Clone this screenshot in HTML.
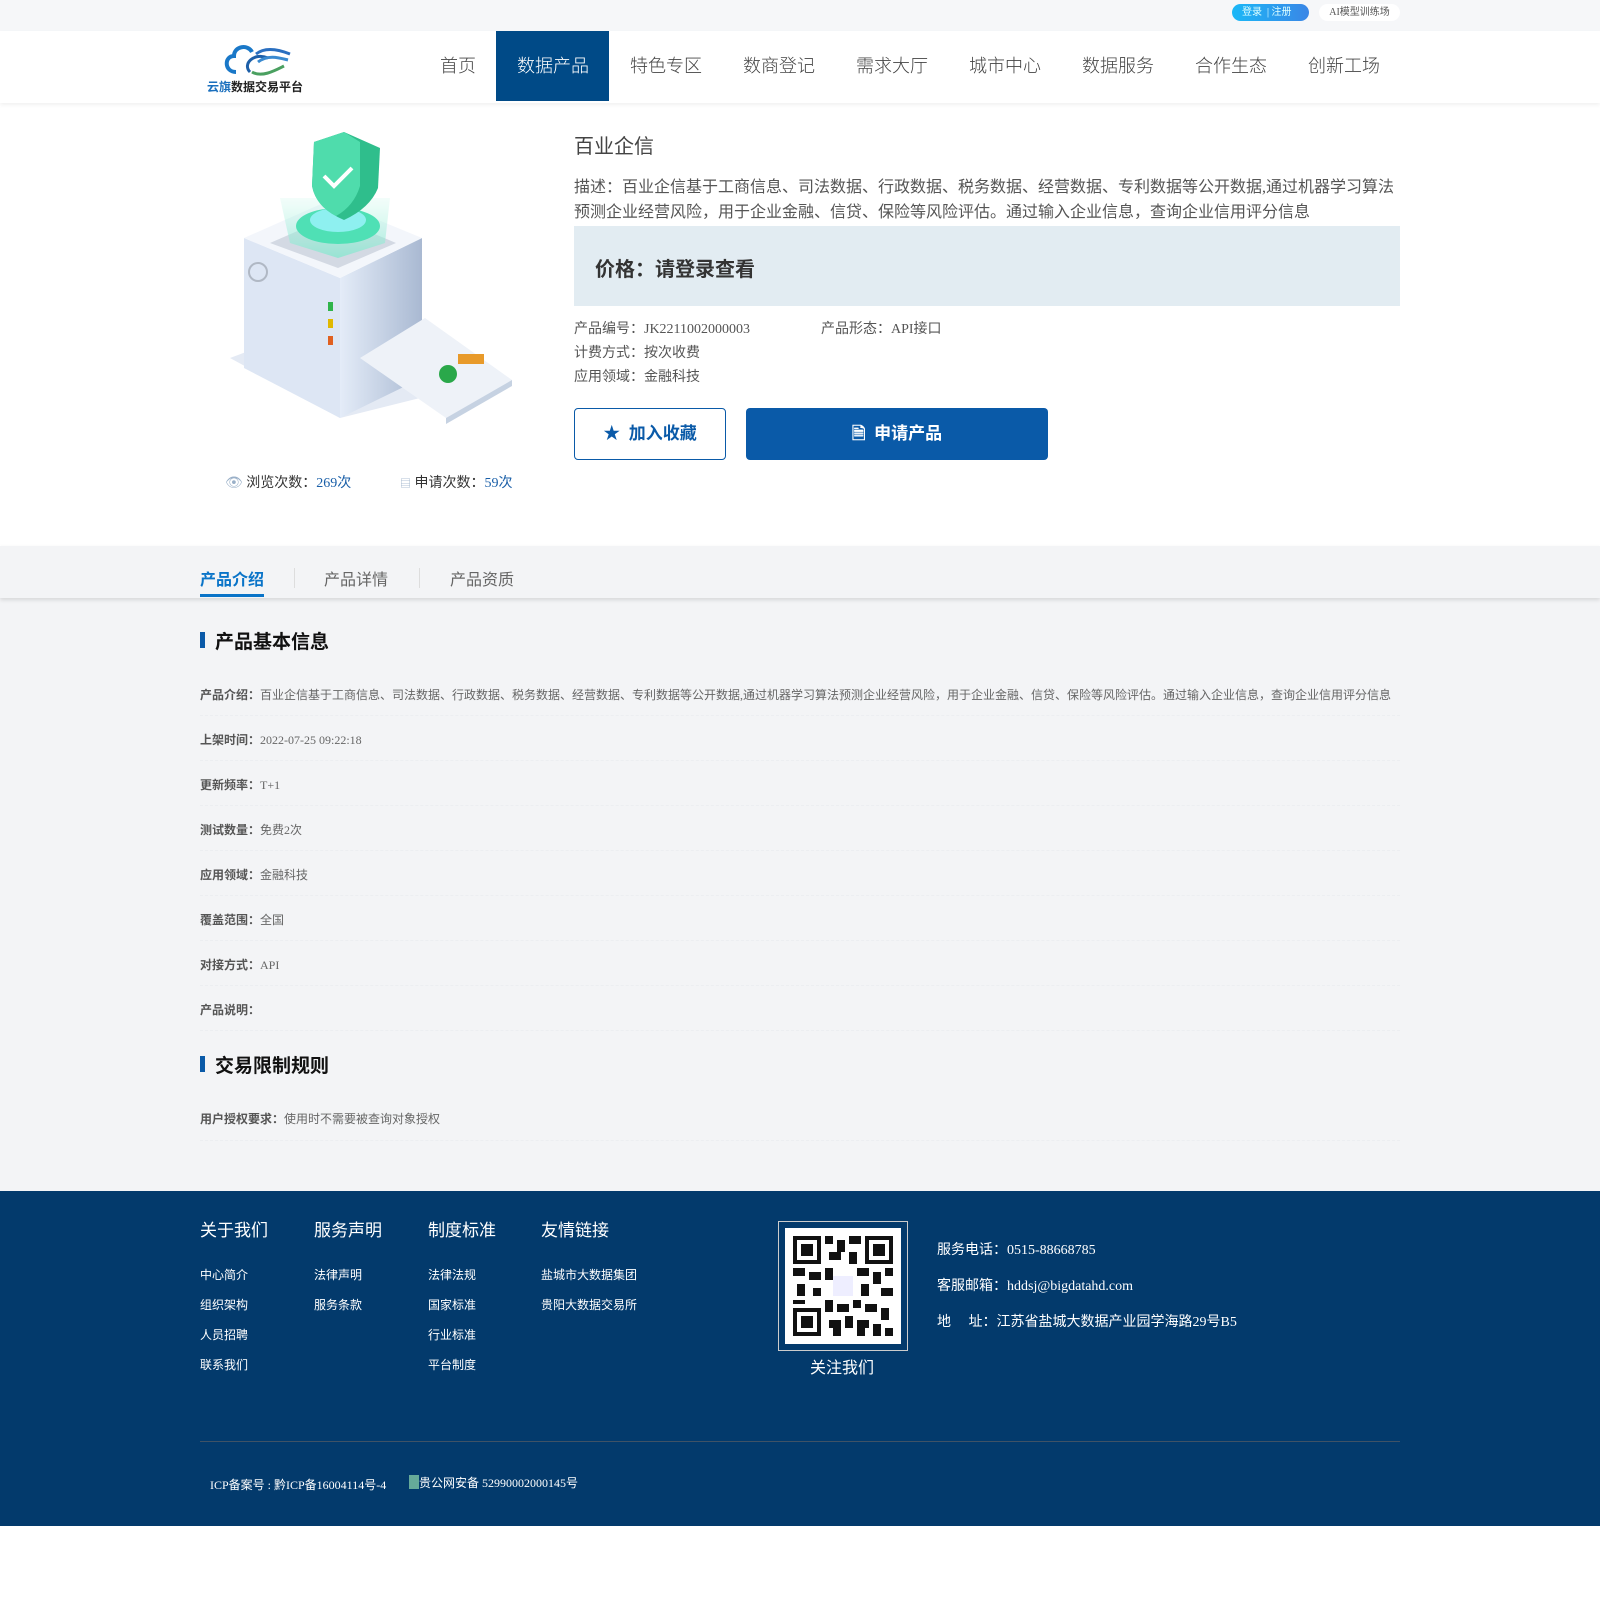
<!DOCTYPE html>
<html><head><meta charset="utf-8">
<style>
*{margin:0;padding:0;box-sizing:border-box}
body{width:1600px;height:1600px;position:relative;background:#fff;font-family:"Liberation Serif","Noto Sans CJK SC",serif;color:#333;overflow:hidden}
.a{position:absolute;white-space:nowrap}
.nav{font-family:"Liberation Sans","Noto Sans CJK SC",sans-serif;font-size:18px;color:#444;top:52px;font-weight:300}
.lbl{font-size:12px;color:#666}
.lbl b{color:#555}
.dl{position:absolute;left:200px;width:1200px;border-top:1px dashed #eceef1}
.fh{font-size:17px;color:#fff;top:1216px;font-family:"Liberation Sans","Noto Sans CJK SC",sans-serif}
.fl{font-size:12px;color:#fff}
</style></head><body>
<div class="a" style="left:0;top:0;width:1600px;height:31px;background:#f6f7f9"></div>
<div class="a" style="left:1232px;top:4px;width:77px;height:17px;border-radius:9px;background:linear-gradient(90deg,#1bb8f7,#3a86e6);color:#dff;font-size:10px;line-height:17px;padding-left:10px">登录 &nbsp;| 注册</div>
<div class="a" style="left:1319px;top:4px;width:81px;height:17px;border-radius:9px;background:#fff;color:#555;font-size:10px;line-height:17px;text-align:center">AI模型训练场</div>
<div class="a" style="left:0;top:31px;width:1600px;height:72px;background:#fff;box-shadow:0 2px 4px rgba(0,0,0,.06)"></div>
<svg class="a" style="left:222px;top:42px" width="72" height="36" viewBox="0 0 72 36"><path d="M14 30 C2 30 2 14 12 14 C12 4 26 2 30 10" fill="none" stroke="#1a78c8" stroke-width="4"/><path d="M28 30 C20 22 32 10 46 16" fill="none" stroke="#1d5fa8" stroke-width="3"/><path d="M34 12 C44 4 58 8 68 12" fill="none" stroke="#2a6fc0" stroke-width="3"/><path d="M36 20 C46 12 58 16 66 18" fill="none" stroke="#3a8ad0" stroke-width="3"/><path d="M30 30 C40 36 54 28 62 24" fill="none" stroke="#4aa060" stroke-width="3"/></svg>
<div class="a" style="left:207px;top:78px;font-size:12px;font-weight:bold;font-family:'Liberation Sans','Noto Sans CJK SC',sans-serif;color:#222"><span style="color:#1a6fbd">云旗</span>数据交易平台</div>
<div class="a" style="left:496px;top:31px;width:113px;height:70px;background:#004a87"></div>
<div class="a nav" style="left:440px">首页</div>
<div class="a nav" style="left:517px;color:#fff">数据产品</div>
<div class="a nav" style="left:630px">特色专区</div>
<div class="a nav" style="left:743px">数商登记</div>
<div class="a nav" style="left:856px">需求大厅</div>
<div class="a nav" style="left:969px">城市中心</div>
<div class="a nav" style="left:1082px">数据服务</div>
<div class="a nav" style="left:1195px">合作生态</div>
<div class="a nav" style="left:1308px">创新工场</div>

<svg class="a" style="left:220px;top:128px" width="306" height="310" viewBox="0 0 306 310">
<defs><linearGradient id="g1" x1="0" x2="1"><stop offset="0" stop-color="#e4ecf8"/><stop offset="1" stop-color="#a9b9d2"/></linearGradient><linearGradient id="gl" x1="0" y1="0" x2="0" y2="1"><stop offset="0" stop-color="#bff5e6" stop-opacity=".2"/><stop offset="1" stop-color="#7de8cc" stop-opacity=".7"/></linearGradient></defs>
<path d="M10 230 L120 290 L200 270 L200 250 L90 200 Z" fill="#e4eaf4"/>
<path d="M24 110 L120 150 L120 290 L24 240 Z" fill="#dde6f4"/>
<path d="M120 150 L202 110 L202 250 L120 290 Z" fill="url(#g1)"/>
<path d="M24 110 L110 72 L202 110 L120 150 Z" fill="#f3f6fb"/>
<path d="M50 115 L112 88 L176 115 L118 140 Z" fill="#d3d9e3"/>
<path d="M60 70 L170 70 L165 115 L118 130 L70 115 Z" fill="url(#gl)"/>
<ellipse cx="118" cy="98" rx="42" ry="18" fill="#4fe0b5"/>
<ellipse cx="118" cy="92" rx="28" ry="12" fill="#8ef0f0"/>
<path d="M94 14 L124 4 L160 20 L158 60 Q150 80 124 92 Q96 80 92 58 Z" fill="#2fbe8c"/>
<path d="M94 14 L124 4 L140 14 L140 58 Q134 78 116 88 Q96 78 92 58 Z" fill="#4fdcac"/>
<path d="M104 48 L114 58 L132 40" fill="none" stroke="#fff" stroke-width="4"/>
<rect x="108" y="174" width="5" height="9" fill="#2fb44a"/><rect x="108" y="191" width="5" height="9" fill="#e0b800"/><rect x="108" y="208" width="5" height="9" fill="#e06020"/>
<circle cx="38" cy="144" r="9" fill="none" stroke="#b0b8c4" stroke-width="2"/>
<path d="M140 230 L205 190 L292 252 L226 290 Z" fill="#eef2f8"/>
<path d="M226 290 L292 252 L292 258 L226 296 Z" fill="#c6d2e2"/>
<circle cx="228" cy="246" r="9" fill="#2aa84a"/>
<rect x="238" y="226" width="26" height="10" fill="#e89a2a"/>
</svg>
<div class="a" style="left:225px;top:472px;font-size:14px;color:#333"><span style="color:#9ab0c8">👁</span> 浏览次数：<span style="color:#1a5fa8">269次</span></div>
<div class="a" style="left:400px;top:472px;font-size:14px;color:#333"><span style="color:#9ab0c8;font-size:11px">▤</span> 申请次数：<span style="color:#1a5fa8">59次</span></div>

<div class="a" style="left:574px;top:130px;font-size:20px;color:#444">百业企信</div>
<div class="a" style="left:574px;top:175px;font-size:16px;color:#555;line-height:25px;width:830px;white-space:normal">描述：百业企信基于工商信息、司法数据、行政数据、税务数据、经营数据、专利数据等公开数据,通过机器学习算法预测企业经营风险，用于企业金融、信贷、保险等风险评估。通过输入企业信息，查询企业信用评分信息</div>
<div class="a" style="left:574px;top:226px;width:826px;height:80px;background:#e2ecf2"></div>
<div class="a" style="left:595px;top:253px;font-size:20px;font-weight:bold;color:#333">价格：请登录查看</div>
<div class="a" style="left:574px;top:318px;font-size:14px;color:#555">产品编号：JK2211002000003</div>
<div class="a" style="left:821px;top:318px;font-size:14px;color:#555">产品形态：API接口</div>
<div class="a" style="left:574px;top:342px;font-size:14px;color:#555">计费方式：按次收费</div>
<div class="a" style="left:574px;top:366px;font-size:14px;color:#555">应用领域：金融科技</div>
<div class="a" style="left:574px;top:408px;width:152px;height:52px;border:1px solid #0a5aa8;border-radius:4px;color:#0a5aa8;font-size:17px;font-weight:bold;text-align:center;line-height:50px">★ &nbsp;加入收藏</div>
<div class="a" style="left:746px;top:408px;width:302px;height:52px;background:#0a5aa8;border-radius:4px;color:#fff;font-size:17px;font-weight:bold;text-align:center;line-height:52px">🗎 &nbsp;申请产品</div>

<div class="a" style="left:0;top:546px;width:1600px;height:645px;background:#f3f4f6"></div>
<div class="a" style="left:0;top:546px;width:1600px;height:52px;background:#f3f4f6;box-shadow:0 2px 4px rgba(0,0,0,.12)"></div>
<div class="a" style="left:200px;top:566px;font-size:16px;color:#0a74c8;font-weight:bold;font-family:'Liberation Sans','Noto Sans CJK SC',sans-serif">产品介绍</div>
<div class="a" style="left:200px;top:594px;width:64px;height:3px;background:#0a74c8"></div>
<div class="a" style="left:294px;top:568px;width:1px;height:20px;background:#ddd"></div>
<div class="a" style="left:324px;top:566px;font-size:16px;color:#666;font-family:'Liberation Sans','Noto Sans CJK SC',sans-serif">产品详情</div>
<div class="a" style="left:419px;top:568px;width:1px;height:20px;background:#ddd"></div>
<div class="a" style="left:450px;top:566px;font-size:16px;color:#666;font-family:'Liberation Sans','Noto Sans CJK SC',sans-serif">产品资质</div>

<div class="a" style="left:200px;top:632px;width:5px;height:16px;background:#0a5aa8"></div>
<div class="a" style="left:215px;top:627px;font-size:19px;font-weight:bold;color:#111">产品基本信息</div>
<div class="a lbl" style="left:200px;top:686px"><b>产品介绍：</b>百业企信基于工商信息、司法数据、行政数据、税务数据、经营数据、专利数据等公开数据,通过机器学习算法预测企业经营风险，用于企业金融、信贷、保险等风险评估。通过输入企业信息，查询企业信用评分信息</div>
<div class="dl" style="top:715px"></div>
<div class="a lbl" style="left:200px;top:731px"><b>上架时间：</b>2022-07-25 09:22:18</div>
<div class="dl" style="top:760px"></div>
<div class="a lbl" style="left:200px;top:776px"><b>更新频率：</b>T+1</div>
<div class="dl" style="top:805px"></div>
<div class="a lbl" style="left:200px;top:821px"><b>测试数量：</b>免费2次</div>
<div class="dl" style="top:850px"></div>
<div class="a lbl" style="left:200px;top:866px"><b>应用领域：</b>金融科技</div>
<div class="dl" style="top:895px"></div>
<div class="a lbl" style="left:200px;top:911px"><b>覆盖范围：</b>全国</div>
<div class="dl" style="top:940px"></div>
<div class="a lbl" style="left:200px;top:956px"><b>对接方式：</b>API</div>
<div class="dl" style="top:985px"></div>
<div class="a lbl" style="left:200px;top:1001px"><b>产品说明：</b></div>
<div class="dl" style="top:1030px"></div>
<div class="a" style="left:200px;top:1056px;width:5px;height:16px;background:#0a5aa8"></div>
<div class="a" style="left:215px;top:1051px;font-size:19px;font-weight:bold;color:#111">交易限制规则</div>
<div class="a lbl" style="left:200px;top:1110px"><b>用户授权要求：</b>使用时不需要被查询对象授权</div>
<div class="dl" style="top:1140px"></div>

<div class="a" style="left:0;top:1191px;width:1600px;height:335px;background:#033a6c"></div>
<div class="a fh" style="left:200px">关于我们</div>
<div class="a fh" style="left:314px">服务声明</div>
<div class="a fh" style="left:428px">制度标准</div>
<div class="a fh" style="left:541px">友情链接</div>
<div class="a fl" style="left:200px;top:1260px;line-height:30px">中心简介<br>组织架构<br>人员招聘<br>联系我们</div>
<div class="a fl" style="left:314px;top:1260px;line-height:30px">法律声明<br>服务条款</div>
<div class="a fl" style="left:428px;top:1260px;line-height:30px">法律法规<br>国家标准<br>行业标准<br>平台制度</div>
<div class="a fl" style="left:541px;top:1260px;line-height:30px">盐城市大数据集团<br>贵阳大数据交易所</div>
<div class="a" style="left:778px;top:1221px;width:130px;height:130px;border:1px solid #ccc;padding:6px"><div style="width:116px;height:116px;background:#fff;padding:8px">
<svg width="100" height="100" viewBox="0 0 25 25"><g fill="#111"><path d="M0 0h7v7H0zM18 0h7v7h-7zM0 18h7v7H0z"/></g><g fill="#fff"><path d="M1 1h5v5H1zM19 1h5v5h-5zM1 19h5v5H1z"/></g><g fill="#111"><path d="M2 2h3v3H2zM20 2h3v3h-3zM2 20h3v3H2z"/><path d="M8 0h2v2H8zM11 1h2v3h-2zM14 0h3v2h-3zM9 4h3v2H9zM14 4h2v3h-2zM0 8h3v2H0zM4 9h3v2H4zM8 8h2v3H8zM16 8h3v2h-3zM20 9h2v3h-2zM23 8h2v2h-2zM1 12h2v3H1zM5 13h2v2H5zM17 12h2v3h-2zM22 13h3v2h-3zM0 16h3v1H0zM8 16h2v3H8zM11 17h3v2h-3zM15 16h2v2h-2zM18 17h3v2h-3zM22 18h2v3h-2zM9 21h3v2H9zM13 20h2v3h-2zM16 21h3v2h-3zM20 22h2v3h-2zM23 23h2v2h-2zM10 23h2v2h-2zM16 23h2v2h-2z"/></g><rect x="10" y="10" width="5" height="5" fill="#eef"/></svg></div></div>
<div class="a" style="left:810px;top:1354px;font-size:16px;color:#fff">关注我们</div>
<div class="a" style="left:937px;top:1239px;font-size:14px;color:#fff">服务电话：0515-88668785</div>
<div class="a" style="left:937px;top:1275px;font-size:14px;color:#fff">客服邮箱：hddsj@bigdatahd.com</div>
<div class="a" style="left:937px;top:1311px;font-size:14px;color:#fff">地 &nbsp;&nbsp;&nbsp;&nbsp;址：江苏省盐城大数据产业园学海路29号B5</div>
<div class="a" style="left:200px;top:1441px;width:1200px;height:1px;background:#3f5266"></div>
<div class="a" style="left:210px;top:1476px;font-size:12px;color:#fff">ICP备案号 : 黔ICP备16004114号-4</div>
<div class="a" style="left:409px;top:1474px;font-size:12px;color:#fff"><span style="display:inline-block;width:10px;height:14px;background:#6a9;vertical-align:-2px"></span>贵公网安备 52990002000145号</div>
</body></html>
